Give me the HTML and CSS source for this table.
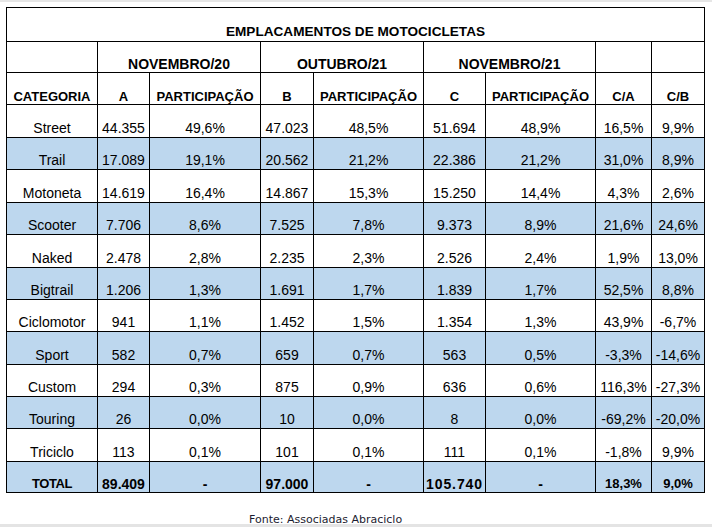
FILE: index.html
```html
<!DOCTYPE html>
<html lang="pt-BR">
<head>
<meta charset="utf-8">
<title>Emplacamentos de Motocicletas</title>
<link rel="stylesheet" href="styles.css">
</head>
<body>
<div class="topline"></div>
<div class="sheet">
  <div class="grid">
    <div class="c title">EMPLACAMENTOS DE MOTOCICLETAS</div>

    <div class="c h1"></div>
    <div class="c h1 span2">NOVEMBRO/20</div>
    <div class="c h1 span2">OUTUBRO/21</div>
    <div class="c h1 span2">NOVEMBRO/21</div>
    <div class="c h1"></div>
    <div class="c h1"></div>

    <div class="c h2">CATEGORIA</div>
    <div class="c h2">A</div>
    <div class="c h2">PARTICIPAÇÃO</div>
    <div class="c h2">B</div>
    <div class="c h2">PARTICIPAÇÃO</div>
    <div class="c h2">C</div>
    <div class="c h2">PARTICIPAÇÃO</div>
    <div class="c h2">C/A</div>
    <div class="c h2">C/B</div>

    <div class="row">
      <div class="c">Street</div><div class="c">44.355</div><div class="c">49,6%</div><div class="c">47.023</div><div class="c">48,5%</div><div class="c">51.694</div><div class="c">48,9%</div><div class="c">16,5%</div><div class="c">9,9%</div>
    </div>
    <div class="row blue">
      <div class="c">Trail</div><div class="c">17.089</div><div class="c">19,1%</div><div class="c">20.562</div><div class="c">21,2%</div><div class="c">22.386</div><div class="c">21,2%</div><div class="c">31,0%</div><div class="c">8,9%</div>
    </div>
    <div class="row">
      <div class="c">Motoneta</div><div class="c">14.619</div><div class="c">16,4%</div><div class="c">14.867</div><div class="c">15,3%</div><div class="c">15.250</div><div class="c">14,4%</div><div class="c">4,3%</div><div class="c">2,6%</div>
    </div>
    <div class="row blue">
      <div class="c">Scooter</div><div class="c">7.706</div><div class="c">8,6%</div><div class="c">7.525</div><div class="c">7,8%</div><div class="c">9.373</div><div class="c">8,9%</div><div class="c">21,6%</div><div class="c">24,6%</div>
    </div>
    <div class="row">
      <div class="c">Naked</div><div class="c">2.478</div><div class="c">2,8%</div><div class="c">2.235</div><div class="c">2,3%</div><div class="c">2.526</div><div class="c">2,4%</div><div class="c">1,9%</div><div class="c">13,0%</div>
    </div>
    <div class="row blue">
      <div class="c">Bigtrail</div><div class="c">1.206</div><div class="c">1,3%</div><div class="c">1.691</div><div class="c">1,7%</div><div class="c">1.839</div><div class="c">1,7%</div><div class="c">52,5%</div><div class="c">8,8%</div>
    </div>
    <div class="row">
      <div class="c">Ciclomotor</div><div class="c">941</div><div class="c">1,1%</div><div class="c">1.452</div><div class="c">1,5%</div><div class="c">1.354</div><div class="c">1,3%</div><div class="c">43,9%</div><div class="c">-6,7%</div>
    </div>
    <div class="row blue">
      <div class="c">Sport</div><div class="c">582</div><div class="c">0,7%</div><div class="c">659</div><div class="c">0,7%</div><div class="c">563</div><div class="c">0,5%</div><div class="c">-3,3%</div><div class="c">-14,6%</div>
    </div>
    <div class="row">
      <div class="c">Custom</div><div class="c">294</div><div class="c">0,3%</div><div class="c">875</div><div class="c">0,9%</div><div class="c">636</div><div class="c">0,6%</div><div class="c">116,3%</div><div class="c">-27,3%</div>
    </div>
    <div class="row blue">
      <div class="c">Touring</div><div class="c">26</div><div class="c">0,0%</div><div class="c">10</div><div class="c">0,0%</div><div class="c">8</div><div class="c">0,0%</div><div class="c">-69,2%</div><div class="c">-20,0%</div>
    </div>
    <div class="row">
      <div class="c">Triciclo</div><div class="c">113</div><div class="c">0,1%</div><div class="c">101</div><div class="c">0,1%</div><div class="c">111</div><div class="c">0,1%</div><div class="c">-1,8%</div><div class="c">9,9%</div>
    </div>
    <div class="row blue total">
      <div class="c label">TOTAL</div><div class="c">89.409</div><div class="c">-</div><div class="c">97.000</div><div class="c">-</div><div class="c wide">105.740</div><div class="c">-</div><div class="c small">18,3%</div><div class="c small">9,0%</div>
    </div>
  </div>
</div>
<p class="fonte">Fonte: Associadas Abraciclo</p>
<div class="bottomline"></div>
</body>
</html>
```
FILE: styles.css
```css
html, body {
  margin: 0;
  padding: 0;
  background: #ffffff;
}

body {
  font-family: "Liberation Sans", Arial, sans-serif;
  color: #000000;
}

.topline {
  height: 2px;
  background: #e6e6e6;
}

.sheet {
  padding: 5px 0 0 6px;
}

.grid {
  display: grid;
  width: max-content;
  grid-template-columns: 90px 51px 110px 52px 109px 61px 109px 55px 52px;
  grid-template-rows: 33px 30px 31px 32px 31px 32px 31px 32px 31px 31px 32px 31px 31px 32px 30px;
  gap: 1px;
  padding: 1px;
  background: #000000;
}

.row {
  display: contents;
}

.c {
  background: #ffffff;
  display: flex;
  align-items: flex-end;
  justify-content: center;
  font-size: 14px;
  line-height: 16px;
  padding-bottom: 1px;
  white-space: nowrap;
  overflow: visible;
}

.blue > .c {
  background: #bdd7ee;
}

.title {
  grid-column: 1 / -1;
  font-weight: bold;
  font-size: 13.6px;
  line-height: 15px;
  padding-bottom: 2px;
}

.h1 {
  font-weight: bold;
  font-size: 14px;
  line-height: 16px;
  padding-bottom: 0;
}

.span2 {
  grid-column: span 2;
}

.h2 {
  font-weight: bold;
  font-size: 13px;
  line-height: 15px;
  padding-bottom: 0;
}

.total > .c {
  font-weight: bold;
  padding-bottom: 0;
}

.total > .label {
  font-size: 13px;
  letter-spacing: -0.4px;
}

.total > .wide {
  letter-spacing: 0.9px;
}

.total > .small {
  font-size: 13px;
}

.fonte {
  margin: 20px 0 0 249px;
  height: 11px;
  font-family: "DejaVu Sans", Verdana, sans-serif;
  font-size: 11px;
  line-height: 13px;
  color: #1c1c30;
  white-space: nowrap;
}

.bottomline {
  height: 3px;
  background: #e4e4e4;
}
```
